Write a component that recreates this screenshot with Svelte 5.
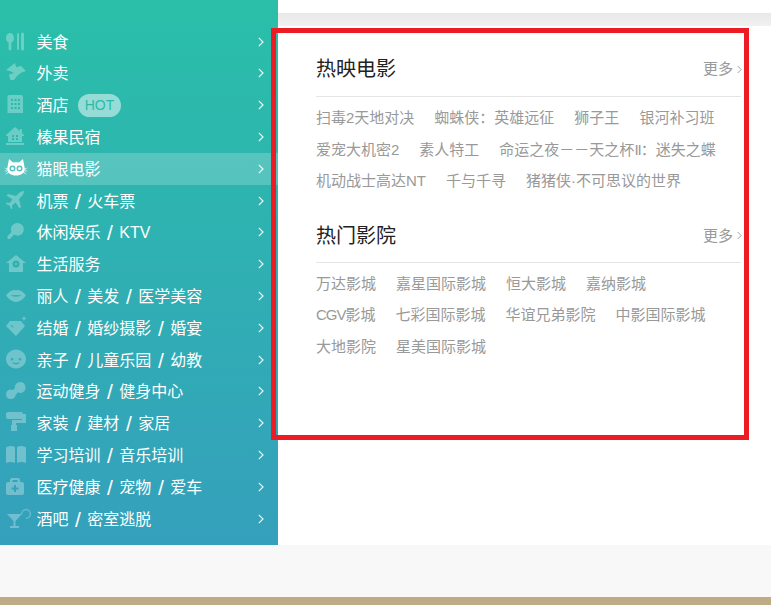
<script>
    const menu = [
        { parts: ['美食'], d: 'M7 3c2.400 0 4 2.400 4 5.200 0 2-1 3.600-2.600 4.300V19a1.400 1.400 0 0 1-2.800 0v-6.500C4 11.800 3 10.200 3 8.200 3 5.400 4.600 3 7 3zM14 4a1 1 0 0 1 2 0v15a1 1 0 0 1-2 0zM18 4a1.500 1.500 0 0 1 3 0v15a1.500 1.500 0 0 1-3 0z' },
        { parts: ['外卖'], d: 'M3 9l9-7 1.200 4.200L18 5l5 5-4.500 1.500L14 15l-3 4H7.500L6 13.500l5-1.500-3 -1.500z' },
        { parts: ['酒店'], hot: true, d: 'M6 2h12a2 2 0 0 1 2 2v16H4.500V4A2 2 0 0 1 6 2zM8 6v2h2V6zM11.500 6v2h2V6zM15 6v2h2V6zM8 10v2h2v-2zM11.500 10v2h2v-2zM15 10v2h2v-2zM8 14v2h2v-2zM11.500 14v2h2v-2zM15 14v2h2v-2z' },
        { parts: ['榛果民宿'], d: 'M12 2l5 4V4h2v4l2 2v1h-2v6H5v-6H3v-1zM9 10v2h2v-2zM13 10v2h2v-2zM9 13v2h2v-2zM13 13v2h2v-2zM3 18h18v2H3z' },
        { parts: ['猫眼电影'], active: true, d: 'M6 2l4 3.500c2-.5 4-.5 6 0L20 2l1.500 8c.2.6.3 1 .3 1.500C21.800 16 18 18.500 13 18.500S4.200 16 4.200 11.500c0-.5.1-.9.3-1.500zM9.500 8.500a3 3 0 1 0 0 6 3 3 0 0 0 0-6zM16.500 8.500a3 3 0 1 0 0 6 3 3 0 0 0 0-6zM9.500 10a1.500 1.500 0 1 1 0 3 1.500 1.500 0 0 1 0-3zM16.500 10a1.500 1.500 0 1 1 0 3 1.500 1.500 0 0 1 0-3zM1 10.500l3.500 1.500-.3 1zM.5 14l3.700-.5.2 1zM2 17.500l3-2.500.6.8zM25 10.500L21.500 12l.3 1zM25.500 14l-3.700-.5-.2 1zM24 17.500L21 15l-.6.8z' },
        { parts: ['机票', '火车票'], d: 'M21 2c-2 0-4 1-5.500 2.500L13 7 5 5 3.500 6.500 9.500 10.500 6.500 14 3.500 13.500 3 15l3.500 1.500L8 20l1.500-.5-.5-3 3.500-3 4 6L18 18 16 10l2.500-2.500C20 6 21 4 21 2z' },
        { parts: ['休闲娱乐', 'KTV'], d: 'M14.500 3a6.300 6.300 0 1 1-3.500 11.500L7 19H4.500v-3l4-4A6.300 6.300 0 0 1 14.500 3z' },
        { parts: ['生活服务'], d: 'M13 3l10 8h-3v9H6v-9H3zM13 8.500a3.500 3.500 0 1 0 0 7 3.500 3.500 0 0 0 0-7zM13 11a1 1 0 1 1 0 2 1 1 0 0 1 0-2z' },
        { parts: ['丽人', '美发', '医学美容'], d: 'M3 11.500C6 8 9.500 5 13 6.500 16.500 5 20 8 23 11.500 20 15.500 16.500 18 13 18S6 15.500 3 11.500zM7 11.500c4 1.500 8 1.500 12 0-4-.8-8-.8-12 0z' },
        { parts: ['结婚', '婚纱摄影', '婚宴'], d: 'M7 5h11l4 5-9 10-10-10zM7.500 9.500l3.500 3-2-3.500zM21 0l.8 1.700L23.500 2.500 21.800 3.300 21 5l-.8-1.700L18.500 2.500l1.700-.8z' },
        { parts: ['亲子', '儿童乐园', '幼教'], d: 'M13 1.500c5.500 0 10 4.300 10 9.500s-4.500 9.500-10 9.500S3 16.200 3 11 7.500 1.500 13 1.500zM9 10a1.300 1.300 0 1 0 0 2.600A1.300 1.300 0 0 0 9 10zM17 10a1.300 1.300 0 1 0 0 2.600A1.300 1.300 0 0 0 17 10zM9.500 15c1.800 1.700 5.200 1.700 7 0l-.7-.7c-1.600 1-4 1-5.600 0z' },
        { parts: ['运动健身', '健身中心'], d: 'M17 3a5.500 5.500 0 0 1 2.500 10.400c-1.500.7-3 .6-4.300-.1l-2.500 2.500A4.800 4.800 0 1 1 7 10.500c1 0 1.900.3 2.800.8l2-2A5.500 5.500 0 0 1 17 3z' },
        { parts: ['家装', '建材', '家居'], d: 'M5 1h13a2 2 0 0 1 2 2h3v9H13v2h1v6H8v-6h1V9h10V8H5a2 2 0 0 1-2-2V3a2 2 0 0 1 2-2z' },
        { parts: ['学习培训', '音乐培训'], d: 'M3 4.500C6 2.500 9.500 2.500 12 4v16c-2.500-1.500-6-1.500-9 0zM14 4c2.500-1.500 6-1.500 9 .5V20c-3-1.500-6.500-1.500-9 0z' },
        { parts: ['医疗健康', '宠物', '爱车'], d: 'M9 3h6a2 2 0 0 1 2 2v2h2a2 2 0 0 1 2 2v9a2 2 0 0 1-2 2H5a2 2 0 0 1-2-2V9a2 2 0 0 1 2-2h2V5a2 2 0 0 1 2-2zM9.500 5v2h5V5zM11 10v2.500H8.500v2H11V17h2v-2.500h2.500v-2H13V10z' },
        { parts: ['酒吧', '密室逃脱'], d: 'M4 7h15l-6.500 7v5H16v2H7v-2h3.500v-5zM18 7a5 5 0 1 1 5 5v-1.200A3.800 3.800 0 1 0 19.200 7z' }
    ];

    const movies = ['扫毒2天地对决', '蜘蛛侠：英雄远征', '狮子王', '银河补习班', '爱宠大机密2', '素人特工', '命运之夜－－天之杯II：迷失之蝶', '机动战士高达NT', '千与千寻', '猪猪侠·不可思议的世界'];
    const cinemas = ['万达影城', '嘉星国际影城', '恒大影城', '嘉纳影城', 'CGV影城', '七彩国际影城', '华谊兄弟影院', '中影国际影城', '大地影院', '星美国际影城'];

    const sections = [
        { title: '热映电影', links: movies },
        { title: '热门影院', links: cinemas }
    ];

    // these latin runs sit tighter than the font gives them
    const chunks = (text) => text.split(/(CGV|II)/);
</script>

<div class="page">
    <div class="top">
        <ul class="menu">
            {#each menu as item}
                <li class:active={item.active}>
                    <svg class="icon" viewBox="0 0 26 24" width="26" height="24"><path fill-rule="evenodd" d={item.d} /></svg>
                    <span class="label">
                        {#each item.parts as part, i}{#if i > 0}<span class="sep">/</span>{/if}{part}{/each}
                    </span>
                    {#if item.hot}<span class="hot">HOT</span>{/if}
                    <svg class="arrow" viewBox="0 0 6 10" width="6" height="10"><path d="M.8.8L5 5 .8 9.200" /></svg>
                </li>
            {/each}
        </ul>

        <div class="main">
            <div class="band"></div>
        </div>

        <div class="popup">
            {#each sections as section}
                <section>
                    <div class="head">
                        <h3>{section.title}</h3>
                        <span class="more">更多<svg viewBox="0 0 6 10" width="5" height="9"><path d="M.8.8L5 5 .8 9.200" /></svg></span>
                    </div>
                    <div class="links">
                        {#each section.links as link}
                            <span class="link">{#each chunks(link) as chunk, i}{#if i % 2}<span class="latin">{chunk}</span>{:else}{chunk}{/if}{/each}</span>
                        {/each}
                    </div>
                </section>
            {/each}
        </div>
    </div>

    <div class="foot"></div>
    <div class="strip"></div>
</div>

<style>
    :global(body) {
        background: #fff;
    }

    .page {
        width: 771px;
        height: 605px;
        overflow: hidden;
        font-family: "Liberation Sans", "Noto Sans CJK SC", sans-serif;
    }

    .top {
        position: relative;
        display: flex;
        height: 545px;
    }

    .menu {
        width: 278px;
        height: 545px;
        box-sizing: border-box;
        margin: 0;
        padding: 25.7px 0 0;
        list-style: none;
        background: linear-gradient(180deg, #2abfa9 0%, #35a0bc 100%);
    }

    .menu li {
        display: flex;
        align-items: center;
        height: 31.8px;
        padding: 0 14px 0 3px;
        color: #fff;
        font-size: 16px;
    }

    .menu li.active {
        background: rgba(255, 255, 255, .2);
    }

    .icon {
        flex: none;
        overflow: visible;
        fill: rgba(255, 255, 255, .3);
    }

    .active .icon {
        fill: #fff;
    }

    .label {
        margin-left: 7.5px;
        padding-bottom: 2px;
        white-space: nowrap;
    }

    .sep {
        margin: 0 6.5px;
        font-size: 21px;
        line-height: 1;
        vertical-align: -2px;
    }

    .hot {
        margin-left: 9.5px;
        width: 43px;
        height: 23px;
        border-radius: 12px;
        background: rgba(255, 255, 255, .5);
        color: #2bbba9;
        font-size: 14px;
        line-height: 23px;
        text-align: center;
    }

    .arrow {
        margin-left: auto;
        fill: none;
        stroke: rgba(255, 255, 255, .9);
        stroke-width: 1.2;
    }

    .main {
        flex: 1;
        padding-top: 13px;
    }

    .band {
        height: 13px;
        background: linear-gradient(180deg, #e8e8e8, #f1f1f1);
    }

    .popup {
        position: absolute;
        left: 271px;
        top: 28px;
        width: 478px;
        height: 412px;
        box-sizing: border-box;
        border: 5px solid #ed1c24;
        padding: 17px 3px 0 40px;
    }

    section + section {
        margin-top: 20px;
    }

    section + section .head {
        height: 45px;
    }

    .head {
        display: flex;
        justify-content: space-between;
        align-items: flex-start;
        height: 46px;
        border-bottom: 1px solid #e5e5e5;
    }

    h3 {
        margin: 0;
        color: #222;
        font-size: 20px;
        font-weight: normal;
        line-height: 38px;
    }

    .more {
        display: flex;
        align-items: center;
        gap: 4px;
        color: #999;
        font-size: 15px;
        line-height: 38px;
    }

    .more svg {
        margin-right: -1px;
        fill: none;
        stroke: #999;
        stroke-width: 1.1;
    }

    .links {
        display: flex;
        flex-wrap: wrap;
        column-gap: 20px;
        max-width: 405px;
        margin-top: 5px;
        color: #999;
        font-size: 15px;
        line-height: 31.5px;
    }

    .link {
        white-space: nowrap;
    }

    .latin {
        letter-spacing: -1px;
    }

    .foot {
        height: 52px;
        background: #f8f8f8;
    }

    .strip {
        height: 8px;
        background: #c0ab87;
    }
</style>
